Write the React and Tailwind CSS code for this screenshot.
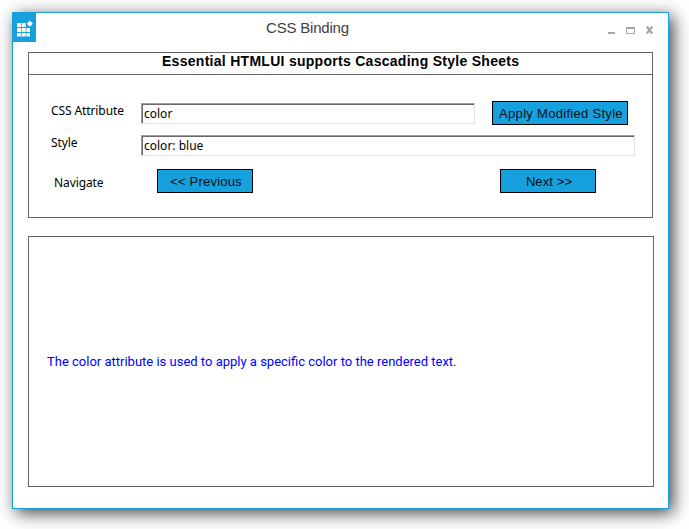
function AppIcon() {
  return (
    <div className="h-[29px] w-[23px] bg-[#16a0dd]">
      <svg width="23" height="29" viewBox="0 0 23 29" fill="#fff">
        <path d="M4 10h4v4H4zM8.7 10h4v4h-4zM4 15h4v4H4zM8.7 15h4v4h-4zM13.4 15H17v4h-3.6zM4 19.9h4v3.7H4zM8.7 19.9h4v3.7h-4zM13.4 19.9H17v3.7h-3.6z" />
        <path d="M16.8 7.6l3 3.1-3 3.1-3-3.1z" />
      </svg>
    </div>
  );
}

function TitleBar() {
  return (
    <header className="flex h-[39px] items-start">
      <AppIcon />
      <h1 className="ml-[230px] mt-[5px] whitespace-nowrap text-[15px] leading-5 tracking-[-0.2px] text-[#404040]">CSS Binding</h1>
      <svg className="ml-auto mr-[14px] mt-[13px]" width="47" height="9" viewBox="0 0 47 9">
        <path d="M1 6h7v2H1z" fill="#a6a6a6" />
        <path d="M19.5 1.5v6h8v-6z" fill="none" stroke="#a6a6a6" />
        <path d="M19 1h9v2h-9z" fill="#a6a6a6" />
        <path d="M39.8 .5l5.4 7M45.2 .5l-5.4 7" stroke="#a6a6a6" strokeWidth="2.2" />
      </svg>
    </header>
  );
}

function Button({ children, className }) {
  return (
    <button className={`h-6 shrink-0 whitespace-nowrap border border-black bg-[#16a0dd] pl-[2px] text-center text-[13px] leading-[23px] text-[#061018] ${className}`}>
      {children}
    </button>
  );
}

function Field({ children, className }) {
  return (
    <div className={`h-[21px] shrink-0 whitespace-nowrap border border-t-[#a0a0a0] border-l-[#a0a0a0] border-r-[#e3e3e3] border-b-[#e3e3e3] font-['Noto_Sans',sans-serif] text-[12px] leading-[18px] text-black shadow-[inset_1px_1px_0_#696969] pl-[2px] pt-px ${className}`}>
      {children}
    </div>
  );
}

function Label({ children, className }) {
  return <div className={`shrink-0 whitespace-nowrap font-['Noto_Sans',sans-serif] text-[12px] leading-4 tracking-[-0.1px] text-black ${className}`}>{children}</div>;
}

export default function App() {
  return (
    <div className="h-[529px] w-[689px] overflow-hidden bg-white p-3 font-['Liberation_Sans',Arial,sans-serif]">
      <main className="h-[497px] w-[657px] border border-[#16a0dd] bg-white shadow-[4px_4px_16px_0px_rgba(0,0,0,0.75)]">
        <TitleBar />
        <div className="ml-[15px]">
          <section className="h-[166px] w-[625px] border border-[#646464]">
            <h2 className="h-[22px] whitespace-nowrap border-b border-[#646464] pl-[133px] text-[14px] font-bold leading-[16px] tracking-[0.28px] text-black">
              Essential HTMLUI supports Cascading Style Sheets
            </h2>
            <div className="mt-[26px] flex h-6 items-start">
              <Label className="ml-[22px] mt-[2px] w-[90px]">CSS Attribute</Label>
              <Field className="mt-[2px] w-[334px]">color</Field>
              <Button className="ml-[17px] w-[136px] tracking-[0.3px]">Apply Modified Style</Button>
            </div>
            <div className="mt-[10px] flex h-[21px] items-start">
              <Label className="ml-[22px] w-[90px]">Style</Label>
              <Field className="w-[494px]">color: blue</Field>
            </div>
            <div className="mt-[13px] flex h-6 items-start">
              <Label className="ml-[25px] mt-[6px] w-[103px]">Navigate</Label>
              <Button className="w-24 tracking-[0.2px]">&lt;&lt; Previous</Button>
              <Button className="ml-[247px] w-24 tracking-[0.1px]">Next &gt;&gt;</Button>
            </div>
          </section>
          <section className="mt-[18px] flex h-[251px] w-[626px] items-center border border-[#646464] pl-[18px]">
            <p className="whitespace-nowrap font-['Roboto',sans-serif] text-[13px] leading-4 text-[#0000ff]">
              The color attribute is used to apply a specific color to the rendered text.
            </p>
          </section>
        </div>
      </main>
    </div>
  );
}
